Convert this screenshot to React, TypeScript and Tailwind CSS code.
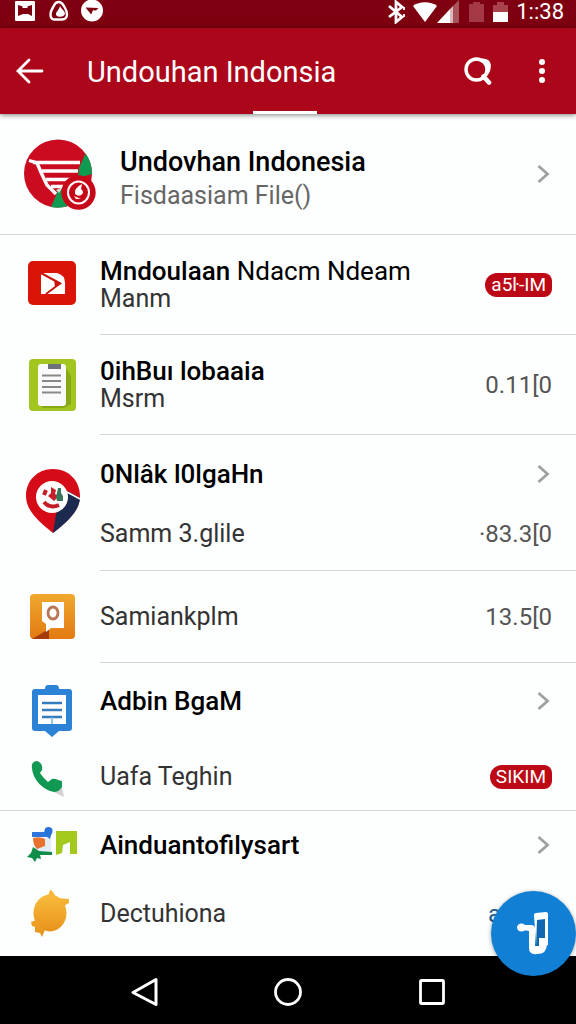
import type { ReactNode } from "react";

function StatusBar() {
  return (
    <div className="flex h-7 items-start justify-between bg-[#7e0010] pl-[15px] pr-3 text-white">
      <div className="flex items-center gap-[12px]">
        <svg width="20" height="22" viewBox="0 0 20 22">
          <rect y="1" width="20" height="20" rx="1" fill="#fff" />
          <path d="M3 5l5 1.500h4l5-1.500v11l-4-2H8l-5 2z" fill="#7e0010" />
          <path d="M7.500 5.500h5v2.500h-5zM8 14.500h4v2H8z" fill="#fff" />
        </svg>
        <svg width="20" height="22" viewBox="0 0 20 22" className="ml-[2px]">
          <path d="M10 2c3 0 4 2.500 5.500 5s2.500 4.500 2.500 7.500c0 3.500-2.500 5-5 5H5.500c-3 0-4-2-4-5C1.500 10 4 8 5 5.500S8 2 10 2z" fill="none" stroke="#fff" strokeWidth="2.400" />
          <path d="M11 5c0 4 5 5 5 9a5 4 0 01-9 1c-.5-4 4-5 4-10z" fill="#fff" />
        </svg>
        <svg width="22" height="22" viewBox="0 0 22 22">
          <circle cx="11" cy="10.500" r="11" fill="#fff" />
          <path d="M4.500 7.500L17.500 8l-2.500 2.500-3-.2-1.800 4.200z" fill="#7e0010" />
        </svg>
      </div>
      <div className="flex items-center">
        <svg width="20" height="24" viewBox="0 0 20 24" className="mr-[6px]">
          <path d="M2 6l13 11-6 5V2l6 5L2 17" fill="none" stroke="#fff" strokeWidth="2.800" />
          <path d="M17 7v3M17 14v3" fill="none" stroke="#fff" strokeWidth="1.800" />
        </svg>
        <svg width="24" height="22" viewBox="0 0 24 22">
          <path d="M0 5c6-5 18-5 24 0L12 21z" fill="#fff" />
        </svg>
        <svg width="22" height="24" viewBox="0 0 22 24" className="mr-[10px]">
          <path d="M0 23L13 9v14z" fill="#fff" />
          <path d="M13 9l3-3v17h-3z" fill="#e0b8bc" />
          <path d="M16 6l6-6v23h-6z" fill="#a8545c" />
        </svg>
        <svg width="15" height="22" viewBox="0 0 15 22" className="mr-[9px]">
          <path d="M0 3h4V1h7v2h4v18H0z" fill="#a33944" />
        </svg>
        <svg width="15" height="22" viewBox="0 0 15 22" className="mr-[8px]">
          <path d="M0 4h4V1h7v3h4v8H0z" fill="#a8424d" />
          <path d="M0 11h15v10H0z" fill="#fff" />
        </svg>
        <span className="text-[22px] leading-6">1::38</span>
      </div>
    </div>
  );
}

function Header() {
  return (
    <header className="relative flex h-[86px] items-center bg-[#ac061b] pl-4 pr-5 text-white shadow-[0_1px_5px_rgba(0,0,0,0.5)]">
      <button type="button" aria-label="Kembali">
        <svg width="28" height="26" viewBox="0 0 28 26" fill="none" stroke="currentColor" strokeWidth="2.800" strokeLinecap="round">
          <path d="M13 2L2 13l11 11M2 13h24" />
        </svg>
      </button>
      <h1 className="flex-1 pl-[43px] pt-[2px] text-[29px] leading-9">Undouhan Indonsia</h1>
      <button type="button" aria-label="Cari" className="mr-9">
        <svg width="28" height="28" viewBox="0 0 28 28" fill="none" stroke="currentColor">
          <circle cx="12.500" cy="12.500" r="10.500" strokeWidth="3.400" />
          <path d="M17 3.500q8-1 8 6 0 4-3 8" strokeWidth="3.800" />
          <path d="M19.500 19.500l5.500 6" strokeWidth="4.600" strokeLinecap="round" />
        </svg>
      </button>
      <button type="button" aria-label="Menu lainnya" className="px-2">
        <svg width="12" height="26" viewBox="0 0 12 26" fill="currentColor">
          <circle cx="6" cy="4" r="3" />
          <circle cx="6" cy="13" r="3" />
          <circle cx="6" cy="22" r="3" />
        </svg>
      </button>
      <span className="absolute bottom-0 left-[44%] h-[3px] w-[11%] bg-white" />
    </header>
  );
}

function Chevron() {
  return (
    <svg width="15" height="20" viewBox="0 0 15 20" fill="none" stroke="#a0a0a0" strokeWidth="2.800">
      <path d="M1.500 2l9 8-9 8" />
    </svg>
  );
}

function CartIcon() {
  return (
    <svg width="74" height="72" viewBox="0 0 74 72">
      <circle cx="34" cy="35.500" r="34" fill="#cb0b20" />
      <path d="M61.500 15.500Q68 24 68 36l-14 4 1-10zM34 53l10-3v18q-9 3-17 1z" fill="#0f9a51" />
      <path d="M9 24.500h47M18 33h36M22 41.500h27M27 48.500h13" stroke="#fff" strokeWidth="3.600" fill="none" />
      <path d="M5 22.500l8 2.500q5 12 10 22l9 9" fill="none" stroke="#fff" strokeWidth="3.400" />
      <path d="M32 52l7-3-4 6z" fill="#bfe5cf" />
      <circle cx="54.500" cy="54.500" r="17.200" fill="#c60818" />
      <ellipse cx="54.500" cy="54.500" rx="10.500" ry="11" fill="none" stroke="#fff" strokeWidth="2" />
      <path d="M58 46q-8 4-7 10 5 4 8-1 0-3-2-4zM50 58l2 3h5" fill="#fff" />
    </svg>
  );
}

function PlayIcon() {
  return (
    <svg width="48" height="44" viewBox="0 0 48 44" className="-mt-1">
      <rect width="48" height="44" rx="5" fill="#db1408" />
      <path d="M13 12h16q8 2 8 10v11H13z" fill="#fff" />
      <path d="M13 12l19 10.500L18 33" fill="none" stroke="#c91510" strokeWidth="2" />
      <path d="M26 18l8 4.500-7 4z" fill="#c91510" />
    </svg>
  );
}

function NotesIcon() {
  return (
    <svg width="47" height="52" viewBox="0 0 47 52">
      <rect width="47" height="52" rx="4" fill="#a3c520" />
      <path d="M37 9l5 8v28l-7 4H14l-4-4z" fill="#87a817" />
      <rect x="9" y="5" width="28" height="42" rx="3" fill="#fafafa" />
      <path d="M19 5h13v5H19z" fill="#6e7379" />
      <path d="M13 16.500h19M13 22h19M13 28h19M13 33.500h19" stroke="#888" strokeWidth="1.800" />
    </svg>
  );
}

function PinIcon() {
  return (
    <svg width="56" height="66" viewBox="0 0 56 66">
      <path d="M28 1C12 1 1 13 1 28c0 16 15 27 27 37 12-10 27-21 27-37C55 13 44 1 28 1z" fill="#d50c17" />
      <path d="M43 23l12 7c-1 14-14 25-27 35l3-19z" fill="#1d2a50" />
      <path d="M42 24l13 7" stroke="#fff" strokeWidth="1.500" />
      <circle cx="27" cy="29" r="16" fill="#fff" />
      <path d="M21 22l-2 5M19 34q6 7 15 3" fill="none" stroke="#c51d25" strokeWidth="4" />
      <path d="M26 19l5 3-1 4 4 2-5 5-6-5 3-3z" fill="#c5202b" />
      <path d="M33 20h3v5l2 3v5h-6l-1-4z" fill="#37785c" />
    </svg>
  );
}

function MapIcon() {
  return (
    <svg width="46" height="46" viewBox="0 0 46 46">
      <defs>
        <linearGradient id="map-bg" x1="0" y1="0" x2="0" y2="1">
          <stop stopColor="#f0a82e" />
          <stop offset="1" stopColor="#e27a12" />
        </linearGradient>
      </defs>
      <rect x="1" width="45" height="45" rx="4" fill="url(#map-bg)" />
      <path d="M3 45l17-10v10z" fill="#a53b0b" />
      <path d="M13 8h22v26H22l-5 4v-8l-4-3z" fill="#fff" />
      <ellipse cx="24" cy="19" rx="5" ry="6" fill="none" stroke="#ba7652" strokeWidth="2.800" />
    </svg>
  );
}

function ClipboardIcon() {
  return (
    <svg width="42" height="54" viewBox="0 0 42 54">
      <path d="M4 5h10q0-4 3-4h8q3 0 3 4h10q3 0 3 3v36q0 3-3 3H28l-7 6-7-6H4q-3 0-3-3V8q0-3 3-3z" fill="#2c83d5" />
      <path d="M7 11h28v29H7z" fill="#fff" />
      <path d="M11 19h20M11 26h20M11 33h20" stroke="#367bbd" strokeWidth="2.400" />
      <path d="M21 33v7" stroke="#73b7dc" strokeWidth="1.500" />
    </svg>
  );
}

function PhoneIcon() {
  return (
    <svg width="36" height="38" viewBox="0 0 36 38" className="mr-2">
      <path d="M24 32l10 5-2-9z" fill="#d4cfd2" />
      <path d="M2 8C1 3 4 1 7 1c4 1 6 5 5 9l-2 3q4 6 8 9l4-3c3-1 7 2 10 2v6q-3 5-8 5C14 30 3 21 2 8z" fill="#119852" />
    </svg>
  );
}

function ShapesIcon() {
  return (
    <svg width="50" height="36" viewBox="0 0 50 36">
      <path d="M6 11h18v14H9z" fill="#e4ecf8" />
      <path d="M5 5h12l4-4 4 4-2 7-3-2H5z" fill="#2f76dc" />
      <circle cx="21.500" cy="4" r="4" fill="#2873d5" />
      <path d="M6 11q7-2 12 1v7l-8 3q-4-4-4-11z" fill="#e8722e" />
      <path d="M6 20l6 4 13 1v3H13l1 4-4-1-2 4-3-4-5-1 4-4z" fill="#118d4a" />
      <path d="M29 4h21v23h-7V15l-7 3-1 8-6 2z" fill="#a4c91d" />
    </svg>
  );
}

function LemonIcon() {
  return (
    <svg width="40" height="48" viewBox="0 0 40 48" className="mr-1">
      <defs>
        <linearGradient id="lemon" x1="0" y1="0" x2="0" y2="1">
          <stop stopColor="#f8bc3c" />
          <stop offset="1" stopColor="#e8931b" />
        </linearGradient>
      </defs>
      <g fill="url(#lemon)">
        <ellipse cx="20" cy="23" rx="16.500" ry="18.500" />
        <path d="M18 6l2-6q2 0 3 2l3 5zM27 8l12 1v4l-7 4zM6 30l-5 2 1 4 3 1v5l5 1 2 4 3-7z" />
      </g>
    </svg>
  );
}

function Badge({ children }: { children: ReactNode }) {
  return (
    <span className="rounded-l-xl rounded-r-lg bg-[#bd0815] px-[6px] text-[19px] leading-6 text-white">{children}</span>
  );
}

function Amount({ children }: { children: ReactNode }) {
  return <span className="text-[24px] leading-7 text-[#555]">{children}</span>;
}

interface RowProps {
  icon?: ReactNode;
  title?: ReactNode;
  text?: ReactNode;
  end?: ReactNode;
  className: string;
}

// One icon + text line; the divider only runs below the text column
function Row({ icon, title, text, end, className }: RowProps) {
  return (
    <div className="flex">
      <div className="flex w-[100px] shrink-0 items-center justify-center pl-1">{icon}</div>
      <div className={`flex flex-1 items-center justify-between pr-6 ${className}`}>
        <div>
          {title && <h2 className="text-[26px] font-medium leading-7 text-black">{title}</h2>}
          {text && <p className="text-[25px] leading-7 text-[#333]">{text}</p>}
        </div>
        {end}
      </div>
    </div>
  );
}

export default function App() {
  return (
    <div className="flex min-h-screen flex-col bg-[#fdfefe] font-['Roboto',sans-serif]">
      <StatusBar />
      <Header />
      <main className="flex-1">
        <section className="flex items-center border-b border-[#d6d6d6] py-[22px] pl-6 pr-6">
          <CartIcon />
          <div className="flex-1 pl-[22px] pt-[10px]">
            <h2 className="text-[27px] font-medium leading-[33px] text-black">Undovhan Indonesia</h2>
            <p className="text-[25px] leading-[33px] text-[#666]">Fisdaasiam File()</p>
          </div>
          <Chevron />
        </section>
        <Row
          icon={<PlayIcon />}
          title={<>Mndoulaan <span className="font-normal">Ndacm Ndeam</span></>}
          text="Manm"
          end={<Badge>a5ŀ-IM</Badge>}
          className="border-b border-[#d6d6d6] pt-[22px] pb-[21px]"
        />
        <Row
          icon={<NotesIcon />}
          title="0ihBuı lobaaia"
          text="Msrm"
          end={<Amount>0.11[0</Amount>}
          className="border-b border-[#d6d6d6] pt-[22px] pb-[21px]"
        />
        <section className="flex">
          <div className="flex w-[100px] shrink-0 items-center justify-center pb-1 pl-[6px]">
            <PinIcon />
          </div>
          <div className="flex-1 border-b border-[#d6d6d6] pb-[6px] pr-6 pt-[9px]">
            <div className="flex items-center justify-between py-4">
              <h2 className="text-[26px] font-medium leading-7 text-black">0Nlâk l0lgaHn</h2>
              <Chevron />
            </div>
            <div className="flex items-center justify-between py-4">
              <p className="text-[25px] leading-7 text-[#333]">Samm 3.glile</p>
              <Amount>·83.3[0</Amount>
            </div>
          </div>
        </section>
        <Row
          icon={<MapIcon />}
          text="Samiankplm"
          end={<Amount>13.5[0</Amount>}
          className="border-b border-[#d6d6d6] pt-8 pb-[31px]"
        />
        <section className="border-b border-[#d6d6d6]">
          <Row icon={<div className="pt-5"><ClipboardIcon /></div>} title="Adbin BgaM" end={<Chevron />} className="py-6" />
          <Row icon={<div className="pt-2"><PhoneIcon /></div>} text="Uafa Teghin" end={<Badge>SIKIM</Badge>} className="pt-6 pb-[19px]" />
        </section>
        <section className="pb-[7px]">
          <Row icon={<ShapesIcon />} title="Ainduantofilysart" end={<Chevron />} className="py-5" />
          <Row
            icon={<LemonIcon />}
            text="Dectuhiona"
            end={<span className="w-16 text-[24px] leading-7 text-[#245c8c]">ar</span>}
            className="py-[21px]"
          />
        </section>
      </main>
      <nav className="flex items-center justify-center gap-[116px] bg-black pb-[18px] pt-[22px]">
        <button type="button" aria-label="Kembali">
          <svg width="28" height="28" viewBox="0 0 28 28" fill="none" stroke="#fff" strokeWidth="3" strokeLinejoin="round">
            <path d="M26 1.500L3 14.500l23 12z" />
          </svg>
        </button>
        <button type="button" aria-label="Beranda">
          <svg width="28" height="28" viewBox="0 0 28 28" fill="none" stroke="#fff" strokeWidth="2.800">
            <circle cx="14" cy="14" r="12.500" />
          </svg>
        </button>
        <button type="button" aria-label="Aplikasi terbaru">
          <svg width="28" height="28" viewBox="0 0 28 28" fill="none" stroke="#fff" strokeWidth="2.800">
            <rect x="2.500" y="2.500" width="23" height="23" rx="1" />
          </svg>
        </button>
      </nav>
      <button
        type="button"
        aria-label="Unduh"
        className="fixed bottom-12 right-0 flex size-[85px] items-center justify-center rounded-full bg-[#1180d4] shadow-[0_1px_4px_rgba(0,0,0,0.35)]"
      >
        <svg width="34" height="44" viewBox="0 0 34 44">
          <ellipse cx="4.500" cy="15.500" rx="4.500" ry="4" fill="#fff" />
          <path d="M6 13h8q4 0 4 4v17h2V26h10v6q0 10-10 10-8 1-8-6V19l-6-1z" fill="#fff" />
          <path d="M17 3q0-2 2-2l10-1q2 0 2 2v31l-6 2-6-2z" fill="#fff" />
          <path d="M20 8l8-1v19h-6v8h-3z" fill="#1168b0" />
        </svg>
      </button>
    </div>
  );
}
